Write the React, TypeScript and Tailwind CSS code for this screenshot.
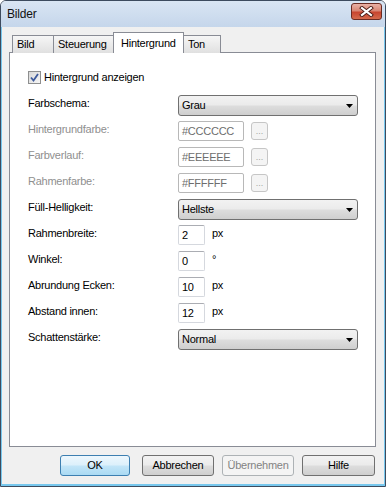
import type { ReactNode } from 'react'

const BTN_GRAD =
  'bg-[linear-gradient(to_bottom,#f2f2f2_0%,#ebebeb_48%,#dddddd_52%,#cfcfcf_100%)]'
const OK_GRAD =
  'bg-[linear-gradient(to_bottom,#edf7fd_0%,#dcf0fb_48%,#c2e5f8_52%,#aadaf3_100%)]'

export default function App() {
  return (
    <div className="flex h-[487px] w-[386px] flex-col overflow-hidden rounded-t-[6px] border border-[#3d4b5e] font-['Liberation_Sans',Arial,sans-serif] text-[11px] tracking-[-0.25px] text-black">
      <TitleBar />
      <div className="flex flex-1 flex-col border-x border-b-2 border-x-[#78c8ee] border-b-[#78c8ee] bg-[#f0f0f0]">
        <Tabs />
        <Panel />
        <div className="mt-[8px] flex h-[21px] pl-[58px]">
          <DialogButton label="OK" tone="default" className="w-[70px]" />
          <DialogButton label="Abbrechen" className="ml-[12px] w-[72px]" />
          <DialogButton label="Übernehmen" tone="disabled" className="ml-[8px] w-[72px]" />
          <DialogButton label="Hilfe" className="ml-[8px] w-[73px]" />
        </div>
      </div>
    </div>
  )
}

/* -------------------------------- chrome -------------------------------- */

function TitleBar() {
  return (
    <div className="flex h-[26px] shrink-0 items-start justify-between bg-[linear-gradient(to_bottom,#d9e5f3,#c5d6eb)] pr-[3px] pl-[6px]">
      <span className="mt-[6px] text-[12px] leading-[14px] tracking-[-0.2px] text-[#111]">
        Bilder
      </span>
      <div className="mt-[2px] flex h-[17px] w-[31px] items-center justify-center rounded-[3px] border border-[#6b2b22] bg-[linear-gradient(to_bottom,#eab1a5_0%,#d98674_45%,#c8452f_55%,#d56a4d_100%)]">
        <svg width="15" height="11" viewBox="0 0 15 11">
          <path d="M3 2 L12 9 M12 2 L3 9" stroke="#4a1c16" strokeWidth="4" strokeLinecap="square" />
          <path d="M3 2 L12 9 M12 2 L3 9" stroke="#fff" strokeWidth="2.2" strokeLinecap="square" />
        </svg>
      </div>
    </div>
  )
}

function Tabs() {
  return (
    <div className="mt-[5px] flex h-[21px] items-end pl-[10px]">
      <Tab label="Bild" className="w-[42px]" />
      <Tab label="Steuerung" className="-ml-px w-[61px]" />
      <Tab label="Hintergrund" active className="-ml-px w-[71px]" />
      <Tab label="Ton" className="-ml-px w-[38px]" />
    </div>
  )
}

function Tab({
  label,
  active,
  className,
}: {
  label: string
  active?: boolean
  className: string
}) {
  return (
    <div
      className={`relative flex items-center border border-b-0 border-[#898c95] leading-[13px] ${
        active
          ? 'z-10 h-[21px] bg-white pl-[7px]'
          : 'h-[18px] bg-[linear-gradient(to_bottom,#f6f6f6,#e0e0e0)] pl-[4px]'
      } ${className}`}
    >
      {label}
    </div>
  )
}

/* -------------------------------- panel --------------------------------- */

function Panel() {
  return (
    <div className="-mt-px ml-[7px] h-[395px] w-[367px] border border-[#898c95] bg-white pl-[18px]">
      <div className="mt-[18px] flex h-[13px] items-center">
        <Checkbox />
        <span className="ml-[3px] leading-[13px]">Hintergrund anzeigen</span>
      </div>

      <div className="mt-[11px] flex flex-col">
        <Row label="Farbschema:">
          <Select value="Grau" />
        </Row>
        <Row label="Hintergrundfarbe:" disabled>
          <ColorField value="#CCCCCC" />
        </Row>
        <Row label="Farbverlauf:" disabled>
          <ColorField value="#EEEEEE" />
        </Row>
        <Row label="Rahmenfarbe:" disabled>
          <ColorField value="#FFFFFF" />
        </Row>
        <Row label="Füll-Helligkeit:">
          <Select value="Hellste" />
        </Row>
        <Row label="Rahmenbreite:">
          <NumberField value="2" unit="px" />
        </Row>
        <Row label="Winkel:">
          <NumberField value="0" unit="°" />
        </Row>
        <Row label="Abrundung Ecken:">
          <NumberField value="10" unit="px" />
        </Row>
        <Row label="Abstand innen:">
          <NumberField value="12" unit="px" />
        </Row>
        <Row label="Schattenstärke:">
          <Select value="Normal" />
        </Row>
      </div>
    </div>
  )
}

function Row({
  label,
  disabled,
  children,
}: {
  label: string
  disabled?: boolean
  children: ReactNode
}) {
  return (
    <div className="flex h-[26px] items-start">
      <span
        className={`mt-[2px] w-[150px] leading-[13px] ${disabled ? 'text-[#8f8f8f]' : 'text-black'}`}
      >
        {label}
      </span>
      {children}
    </div>
  )
}

function Checkbox() {
  return (
    <div className="flex h-[13px] w-[13px] items-center justify-center border border-[#8e8f8f] bg-[linear-gradient(135deg,#d8d8d8,#f6f6f6)]">
      <svg width="9" height="9" viewBox="0 0 9 9">
        <path d="M1 4.5 L3.5 7.5 L8 1" fill="none" stroke="#3d5a9c" strokeWidth="1.8" />
      </svg>
    </div>
  )
}

function Select({ value }: { value: string }) {
  return (
    <div
      className={`flex h-[21px] w-[180px] items-center justify-between rounded-[3px] border border-[#707070] pr-[4px] pl-[3px] ${BTN_GRAD}`}
    >
      <span className="leading-[13px]">{value}</span>
      <svg width="7" height="4" viewBox="0 0 7 4">
        <path d="M0 0 H7 L3.5 4 Z" fill="#000" />
      </svg>
    </div>
  )
}

function ColorField({ value }: { value: string }) {
  return (
    <div className="flex">
      <div className="flex h-[20px] w-[66px] items-center rounded-[2px] border border-[#b8b8b8] bg-white pl-[3px] leading-[13px] text-[#6d6d6d]">
        {value}
      </div>
      <div className="mt-[1px] ml-[7px] flex h-[18px] w-[17px] items-end justify-center rounded-[3px] border border-[#c6c6c6] bg-[#f4f4f4] pb-[3px] text-[9px] leading-none tracking-normal text-[#a3a3a3]">
        ...
      </div>
    </div>
  )
}

function NumberField({ value, unit }: { value: string; unit: string }) {
  return (
    <div className="flex items-start">
      <div className="flex h-[20px] w-[27px] items-center rounded-[2px] border border-[#d5d8de] border-t-[#abadb3] bg-white pl-[3px] leading-[13px]">
        {value}
      </div>
      <span className="mt-[2px] ml-[7px] leading-[13px]">{unit}</span>
    </div>
  )
}

/* ------------------------------- buttons -------------------------------- */

function DialogButton({
  label,
  tone = 'normal',
  className,
}: {
  label: string
  tone?: 'normal' | 'default' | 'disabled'
  className: string
}) {
  const toneClass =
    tone === 'default'
      ? `border-[#3c7fb1] ${OK_GRAD} text-black`
      : tone === 'disabled'
        ? 'border-[#adb2b5] bg-[#f4f4f4] text-[#838383]'
        : `border-[#707070] ${BTN_GRAD} text-black`
  return (
    <div
      className={`flex h-[21px] items-center justify-center rounded-[3px] border leading-[13px] ${toneClass} ${className}`}
    >
      {label}
    </div>
  )
}
